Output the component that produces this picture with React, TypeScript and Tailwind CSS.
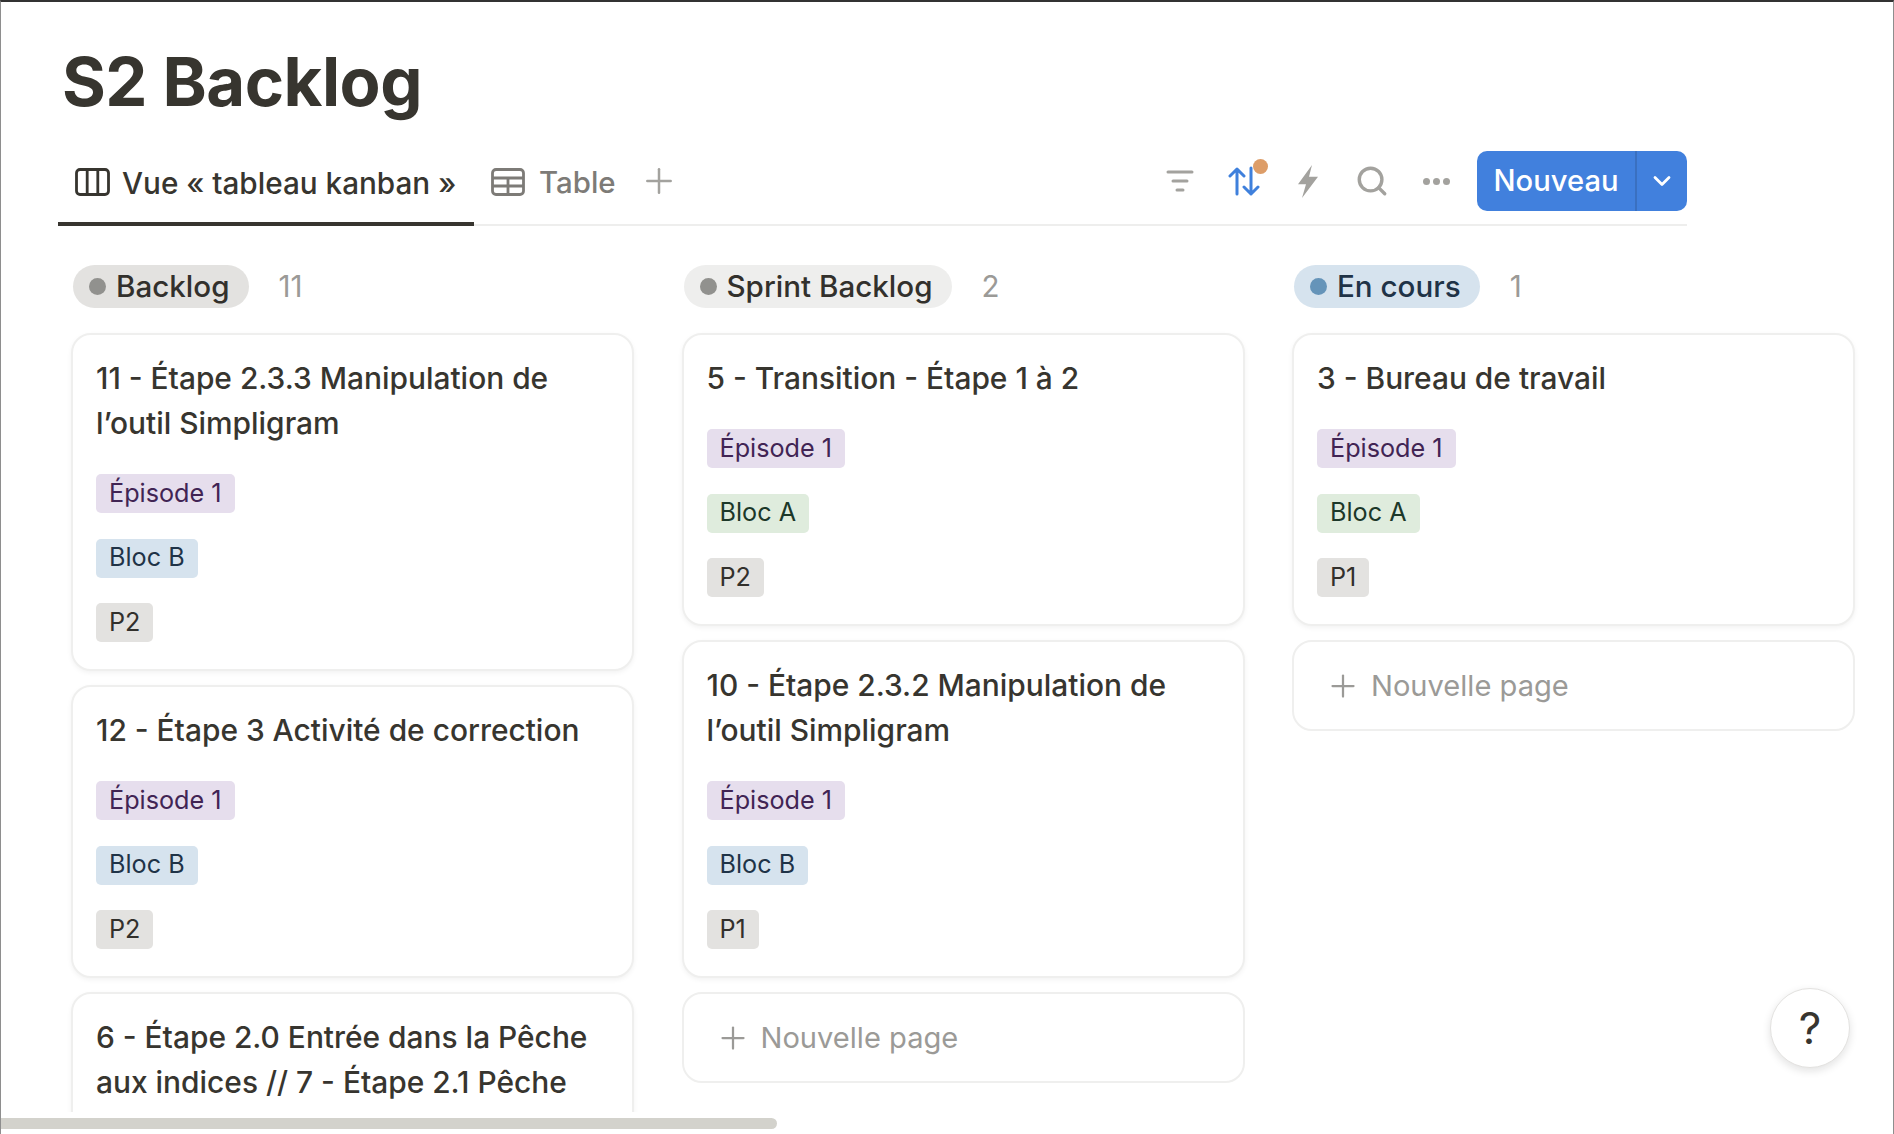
import { ChevronDown, Plus, Search } from "lucide-react";

type CardData = { title: string[]; bloc: "A" | "B"; prio: string; cut?: boolean };

const columns: {
  name: string;
  count: string;
  pill: string;
  dot: string;
  text: string;
  cards: CardData[];
  add?: boolean;
}[] = [
  {
    name: "Backlog",
    count: "11",
    pill: "bg-[#e3e2e0]",
    dot: "bg-[#91918e]",
    text: "text-[#32302c]",
    cards: [
      { title: ["11 - Étape 2.3.3 Manipulation de", "l’outil Simpligram"], bloc: "B", prio: "P2" },
      { title: ["12 - Étape 3 Activité de correction"], bloc: "B", prio: "P2" },
      { title: ["6 - Étape 2.0 Entrée dans la Pêche", "aux indices // 7 - Étape 2.1 Pêche"], bloc: "A", prio: "P2", cut: true },
    ],
  },
  {
    name: "Sprint Backlog",
    count: "2",
    pill: "bg-[#eeeeed]",
    dot: "bg-[#91918e]",
    text: "text-[#32302c]",
    add: true,
    cards: [
      { title: ["5 - Transition - Étape 1 à 2"], bloc: "A", prio: "P2" },
      { title: ["10 - Étape 2.3.2 Manipulation de", "l’outil Simpligram"], bloc: "B", prio: "P1" },
    ],
  },
  {
    name: "En cours",
    count: "1",
    pill: "bg-[#d6e3ee]",
    dot: "bg-[#6594b9]",
    text: "text-[#1f3347]",
    add: true,
    cards: [{ title: ["3 - Bureau de travail"], bloc: "A", prio: "P1" }],
  },
];

function Tag({ label, className }: { label: string; className: string }) {
  return (
    <div className={`flex h-[39px] w-fit items-center rounded-[5px] px-[13px] text-[25.2px] ${className}`}>{label}</div>
  );
}

function Card({ card }: { card: CardData }) {
  return (
    <div className={`rounded-[20px] border-2 border-[#efefee] bg-white px-[23px] pt-[21px] pb-[27px] shadow-[0_2px_5px_rgba(15,15,15,0.05)] ${card.cut ? "min-h-[200px]" : ""}`}>
      <div className="text-[29.9px] leading-[45px] font-medium text-[#37352f]">
        {card.title.map((line) => (
          <div key={line} className="whitespace-nowrap">
            {line}
          </div>
        ))}
      </div>
      {!card.cut && (
        <div className="mt-[28px] flex flex-col gap-[25.5px]">
          <Tag label="Épisode 1" className="bg-[#e6deed] text-[#412454]" />
          <Tag
            label={`Bloc ${card.bloc}`}
            className={card.bloc === "A" ? "bg-[#dfecdd] text-[#1c3829]" : "bg-[#d6e3ee] text-[#1f3347]"}
          />
          <Tag label={card.prio} className="bg-[#e3e2e0] text-[#32302c]" />
        </div>
      )}
    </div>
  );
}

function BoardIcon() {
  return (
    <svg className="mt-[3px] shrink-0" width="35" height="28" viewBox="0 0 35 28" fill="none" stroke="#37352f" strokeWidth="2.8">
      <rect x="1.5" y="1.5" width="32" height="25" rx="3.5" />
      <path d="M12.2 1.5v25M22.8 1.5v25" />
    </svg>
  );
}

function TableIcon() {
  return (
    <svg className="mt-[3px] shrink-0" width="34" height="28" viewBox="0 0 34 28" fill="none" stroke="#7d7b77" strokeWidth="2.8">
      <rect x="1.5" y="1.5" width="31" height="25" rx="3.5" />
      <path d="M1.5 10h31M1.5 18h31M17 10v16.5" />
    </svg>
  );
}

function FilterIcon() {
  return (
    <svg width="28" height="24" viewBox="0 0 28 24" fill="none" stroke="#a3a29e" strokeWidth="3" strokeLinecap="round">
      <path d="M2 3h24M7 12h14M11 21h6" />
    </svg>
  );
}

function SortIcon() {
  return (
    <svg width="32" height="30" viewBox="0 0 32 30" fill="none" stroke="#3f80dc" strokeWidth="3" strokeLinecap="round" strokeLinejoin="round">
      <path d="M9 28V3M2 10l7-7 7 7M23 2v26M16 21l7 7 7-7" />
    </svg>
  );
}

function BoltIcon() {
  return (
    <svg width="22" height="33" viewBox="0 0 22 31" fill="#a3a29e" preserveAspectRatio="none">
      <path d="M15 0 1 18h8L5 31l16-20h-9z" />
    </svg>
  );
}

export default function App() {
  return (
    <div className="relative h-screen w-full overflow-hidden border-x border-t-2 border-x-[#8e8e8e] border-t-[#333] bg-white font-['Inter',sans-serif]">
      <h1 className="pt-[40px] pl-[61px] text-[67px] leading-[80px] font-bold tracking-[-0.5px] text-[#37352f]">S2 Backlog</h1>

      <div className="mt-[29px] ml-[57px] flex h-[75px] w-[1629px] items-start border-b-2 border-[#eeeeed]">
        <div className="-mb-[2px] flex h-[75px] w-[416px] items-start gap-[12px] border-b-4 border-[#37352f] pt-[14px] pl-[17px]">
          <BoardIcon />
          <span className="text-[29.7px] leading-[36px] font-medium whitespace-nowrap text-[#37352f]">Vue « tableau kanban »</span>
        </div>
        <div className="ml-[17px] flex items-start gap-[14px] pt-[14px]">
          <TableIcon />
          <span className="text-[29.4px] leading-[36px] font-medium text-[#7d7b77]">Table</span>
        </div>
        <Plus className="mt-[10px] ml-[23px] text-[#a3a29e]" size={40} strokeWidth={1.5} />

        <div className="ml-auto flex h-[60px] items-center">
          <div className="flex w-[64px] justify-center"><FilterIcon /></div>
          <div className="relative flex w-[64px] justify-center">
            <SortIcon />
            <span className="absolute -top-[7px] right-[8px] h-[15px] w-[15px] rounded-full bg-[#dd9d68]" />
          </div>
          <div className="flex w-[64px] justify-center"><BoltIcon /></div>
          <div className="flex w-[64px] justify-center">
            <Search className="text-[#a3a29e]" size={34} strokeWidth={2.4} />
          </div>
          <div className="mr-[9px] flex w-[64px] justify-center gap-[3px]">
            <span className="h-[7px] w-[7px] rounded-full bg-[#a3a29e]" />
            <span className="h-[7px] w-[7px] rounded-full bg-[#a3a29e]" />
            <span className="h-[7px] w-[7px] rounded-full bg-[#a3a29e]" />
          </div>
          <div className="flex h-[60px] w-[210px] items-center rounded-[10px] bg-[#4180dd] text-white">
            <div className="flex h-full w-[160px] items-center justify-center border-r-2 border-[#3a70c0] text-[29.2px] font-medium">Nouveau</div>
            <div className="flex flex-1 items-center justify-center">
              <ChevronDown size={28} strokeWidth={2.4} />
            </div>
          </div>
        </div>
      </div>

      <div className="mt-[39px] flex h-[847px] items-start gap-[47.5px] overflow-hidden pl-[70px]">
        {columns.map((col) => (
          <div key={col.name} className="flex w-[563px] shrink-0 flex-col">
            <div className="flex h-[43px] items-center pl-[2px]">
              <div className={`flex h-[43px] w-fit items-center gap-[10px] rounded-full pr-[19px] pl-[16px] text-[29.6px] font-medium ${col.pill} ${col.text}`}>
                <span className={`h-[17px] w-[17px] rounded-full ${col.dot}`} />
                <span className="whitespace-nowrap">{col.name}</span>
              </div>
              <span className="ml-[30px] text-[29.6px] text-[#9b9a97]">{col.count}</span>
            </div>
            <div className="mt-[25px] flex flex-col gap-[14px]">
              {col.cards.map((card) => (
                <Card key={card.title[0]} card={card} />
              ))}
              {col.add && (
                <div className="flex h-[91px] items-center gap-[10px] rounded-[20px] border-2 border-[#efefee] pl-[31px] text-[29.1px] text-[#9b9a97]">
                  <Plus size={36} strokeWidth={1.5} />
                  <span>Nouvelle page</span>
                </div>
              )}
            </div>
          </div>
        ))}
      </div>

      <div className="absolute bottom-[5px] left-0 h-[11px] w-[776px] rounded-r-full bg-[#d3d2cc]" />
      <div className="absolute right-[43px] bottom-[66px] flex h-[80px] w-[80px] items-center justify-center rounded-full border border-[#e3e2e0] bg-white text-[44px] font-normal text-[#37352f] shadow-[0_3px_8px_rgba(15,15,15,0.12)]">
        ?
      </div>
    </div>
  );
}
